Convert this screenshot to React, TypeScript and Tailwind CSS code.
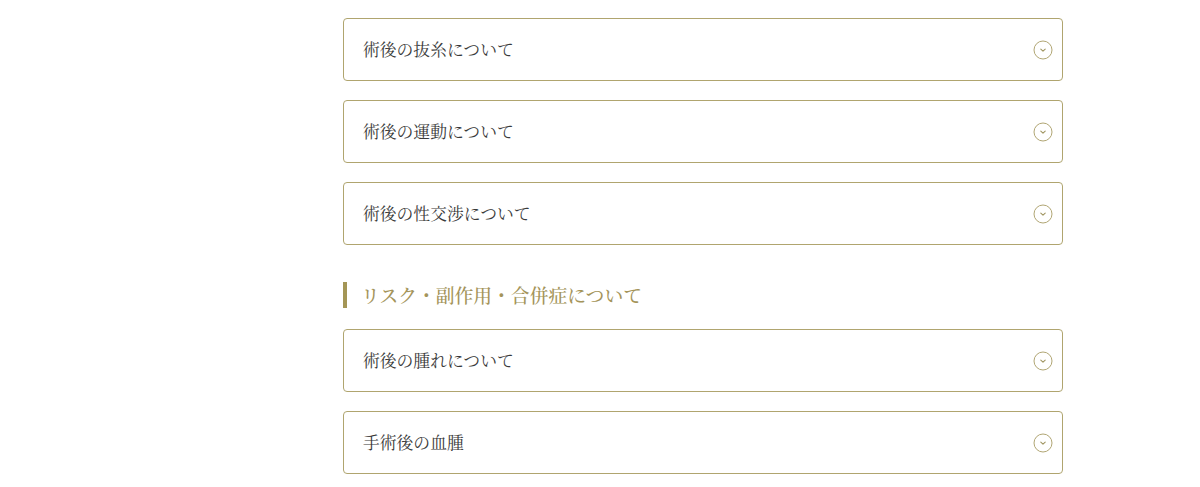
import React from "react";

const serif =
  '"Noto Serif CJK JP", "Noto Serif JP", "Noto Sans CJK JP", serif';

function ChevronCircle() {
  return (
    <svg width="20" height="20" viewBox="0 0 20 20" fill="none" aria-hidden="true">
      <circle cx="10" cy="10" r="9" stroke="#b1a674" strokeWidth="1" />
      <path d="M7.8 9.1 L10 11.1 L12.2 9.1" stroke="#9f945f" strokeWidth="1.1" strokeLinecap="round" strokeLinejoin="round" />
    </svg>
  );
}

function Item({ title }: { title: string }) {
  return (
    <button
      type="button"
      className="flex h-[63px] w-full items-center justify-between rounded-[4px] border border-[#b0a56f] bg-white pl-[19px] pr-[9px] text-left"
    >
      <span className="pt-px text-[16.8px] text-[#3a3a3a]" style={{ fontFamily: serif }}>
        {title}
      </span>
      <ChevronCircle />
    </button>
  );
}

export default function App() {
  return (
    <div className="min-h-[487px] w-[1200px] bg-white">
      <div className="ml-[343px] w-[720px] pt-[18px]">
        <div className="flex flex-col gap-[19px]">
          <Item title="術後の抜糸について" />
          <Item title="術後の運動について" />
          <Item title="術後の性交渉について" />
        </div>
        <h3
          className="mt-[37px] flex h-[26px] items-center border-l-4 border-[#a49656] pl-[14px] text-[18.8px] font-medium text-[#a4945a]"
          style={{ fontFamily: serif }}
        >
          リスク・副作用・合併症について
        </h3>
        <div className="mt-[21px] flex flex-col gap-[19px]">
          <Item title="術後の腫れについて" />
          <Item title="手術後の血腫" />
        </div>
      </div>
    </div>
  );
}
